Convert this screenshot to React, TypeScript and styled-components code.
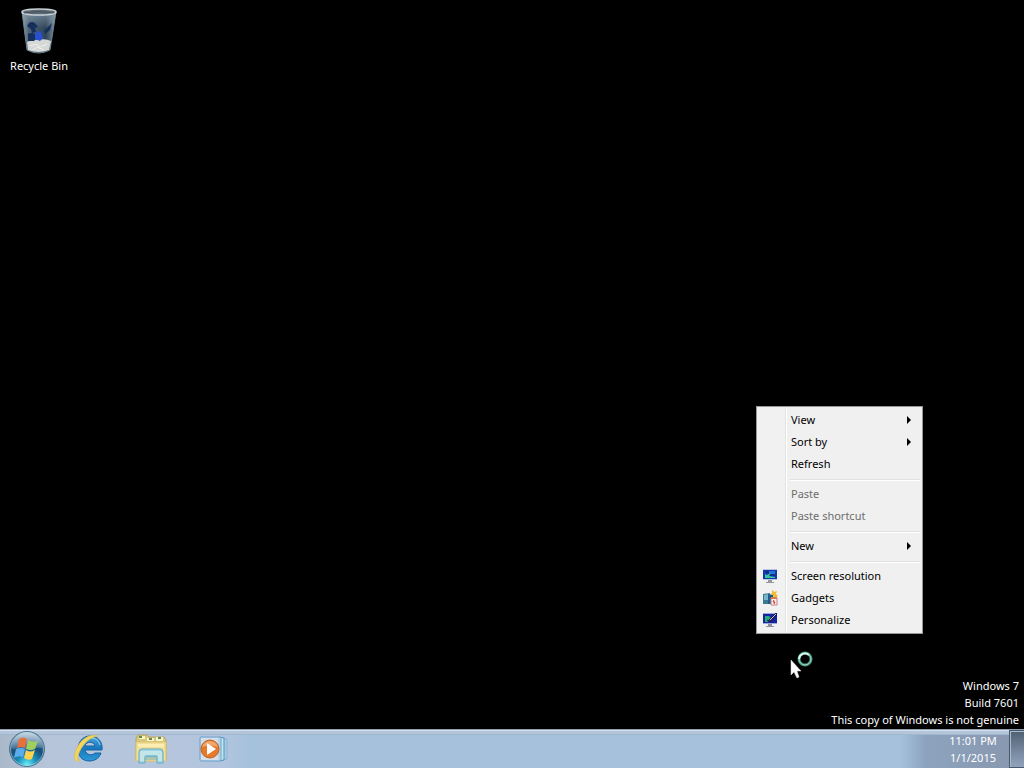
import React from "react";
import styled, { createGlobalStyle } from "styled-components";

const GlobalStyle = createGlobalStyle`
  * { box-sizing: border-box; }
  body {
    margin: 0;
    background: #000;
    font-family: "Noto Sans", "Open Sans", sans-serif;
    font-size: 11px;
  }
  button { font: inherit; color: inherit; border: 0; padding: 0; background: none; }
  svg { display: block; }
`;

const Screen = styled.div`
  position: relative;
  display: flex;
  flex-direction: column;
  min-height: 100vh;
  overflow: hidden;
  background: #000;
`;

const Desktop = styled.main`
  flex: 1;
  display: flex;
  flex-direction: column;
  justify-content: space-between;
  align-items: flex-start;
`;

const DesktopIcon = styled.button`
  display: flex;
  flex-direction: column;
  align-items: center;
  width: 78px;
  padding-top: 7px;
  gap: 3px;
  color: #fff;
  line-height: 16px;
`;

const Watermark = styled.div`
  align-self: flex-end;
  padding: 0 5px 1px 0;
  color: #fff;
  text-align: right;
  line-height: 17px;
`;

const Menu = styled.div`
  position: absolute;
  left: 756px;
  top: 406px;
  width: 167px;
  padding: 2px;
  border: 1px solid #979797;
  background: linear-gradient(to right, #f1f1f1 28px, #e2e3e3 28px, #e2e3e3 29px, #fff 29px, #fff 30px, #f0f0f0 30px);
`;

const MenuItem = styled.button`
  display: grid;
  grid-template-columns: 32px 1fr 12px;
  align-items: center;
  width: 100%;
  height: 22px;
  padding-right: 1px;
  text-align: left;
  color: #000;
  line-height: 22px;
  white-space: nowrap;
  &:disabled { color: #6d6d6d; }
`;

const IconSlot = styled.span`
  padding-left: 3px;
`;

const Separator = styled.hr`
  height: 2px;
  margin: 4px 0 2px 31px;
  border: 0;
  border-top: 1px solid #e0e0e0;
  border-bottom: 1px solid #fff;
`;

const Pointer = styled.div`
  position: absolute;
  left: 790px;
  top: 650px;
`;

const Taskbar = styled.footer`
  display: flex;
  height: 39px;
  border-top: 1px solid #8e9fb2;
  background:
    linear-gradient(to bottom, #d3dfed 0, #d3dfed 1px, #b4c5da 1px, #b4c5da 4px, #a0b7d0 4px, #a0b7d0 5px, transparent 5px),
    linear-gradient(to right, #aab9ca 0, #b6c5da 50px, #b3c5de 220px, #a6c1dc 250px, #a6c1dc calc(100% - 124px), #8da3bd calc(100% - 98px), #8796ad 100%);
`;

const Launchers = styled.nav`
  display: flex;
  flex: 1;
`;

const Launcher = styled.button<{ $start?: boolean }>`
  display: flex;
  align-items: center;
  justify-content: center;
  width: ${(p) => (p.$start ? 54 : 62)}px;
  margin-right: ${(p) => (p.$start ? 4 : 0)}px;
`;

const Clock = styled.time`
  width: 72px;
  padding-top: 2px;
  color: #fff;
  text-align: center;
  line-height: 17px;
`;

const ShowDesktop = styled.button`
  width: 15px;
  border: 1px solid #48596d;
  border-right: 0;
  background: linear-gradient(#4f6073, #788ba3 60%, #8fa3bd);
  box-shadow: inset 1px 1px 0 #a9bacb;
`;

const RecycleBin = () => (
  <svg width="40" height="48" viewBox="0 0 40 48" aria-hidden="true">
    <defs>
      <linearGradient id="bin" x1="0" x2="1">
        <stop offset="0" stopColor="#8da0ac" />
        <stop offset=".2" stopColor="#4c6376" />
        <stop offset=".7" stopColor="#2f4457" />
        <stop offset="1" stopColor="#8495a2" />
      </linearGradient>
      <linearGradient id="binTop" x1="0" y1="0" x2="0" y2="1">
        <stop offset="0" stopColor="#8a9dab" stopOpacity=".7" />
        <stop offset=".4" stopColor="#8a9dab" stopOpacity="0" />
      </linearGradient>
    </defs>
    <path d="M3 5 L8 43 Q20 49 31 43 L37 5 Q20 10 3 5Z" fill="url(#bin)" stroke="#70828f" />
    <path d="M3 5 L8 43 Q20 49 31 43 L37 5 Q20 10 3 5Z" fill="url(#binTop)" />
    <path d="M8 35 Q14 32 19 33 Q26 31 32 34 L30 43 Q20 47 9 43Z" fill="#d5d8d7" />
    <path d="M11 39l6-2 4 3 7-3M14 43l4-3 7 3" stroke="#f0f0ec" fill="none" />
    <path d="M8 19q3-6 8-3l3 4-3 1 1 4-4 1-1-4zM9 27q5-3 10 3l-4 4H9zM25 24l8-8-2 7-5 4z" fill="#15305a" />
    <path d="M16 27q3-5 6-2l2 6-3 3-5-2z" fill="#2a4fd0" />
    <ellipse cx="20" cy="5" rx="17" ry="3" fill="#5b6873" stroke="#cbd2d6" strokeWidth="1.500" />
    <path d="M5 6Q20 3 35 6" stroke="#46545e" fill="none" />
  </svg>
);

const StartOrb = () => (
  <svg width="38" height="38" viewBox="0 0 38 38" aria-hidden="true">
    <defs>
      <radialGradient id="orb" cx=".5" cy=".95" r=".9">
        <stop offset="0" stopColor="#6cf0f6" />
        <stop offset=".3" stopColor="#1b91bd" />
        <stop offset=".6" stopColor="#1a4c78" />
        <stop offset="1" stopColor="#5f8bab" />
      </radialGradient>
      <linearGradient id="orbShine" x1="0" y1="0" x2="0" y2="1">
        <stop offset="0" stopColor="#fff" stopOpacity=".65" />
        <stop offset="1" stopColor="#fff" stopOpacity=".1" />
      </linearGradient>
    </defs>
    <circle cx="19" cy="19" r="17.500" fill="url(#orb)" stroke="#4f7592" />
    <path d="M3 18C4 8 11 2 19 2s15 6 16 16c-9-2-22 5-32 0z" fill="url(#orbShine)" />
    <path d="M11 9q4-3 8 0l-2 9q-4-2-8 0z" fill="#e8703c" />
    <path d="M20 10q4 3 10 1l-3 8q-4 2-9 0z" fill="#9fcf5e" />
    <path d="M8 19q5-2 9 0l-2 8q-4-2-9 1z" fill="#5cabea" />
    <path d="M18 20q4 3 9 0l-3 9q-4 2-8-1z" fill="#ffd34e" />
    <circle cx="19" cy="19" r="16.500" fill="none" stroke="#a9d0e0" opacity=".6" />
  </svg>
);

const Browser = () => (
  <svg width="34" height="34" viewBox="0 0 34 34" aria-hidden="true">
    <defs>
      <linearGradient id="ie" x1="0" y1="0" x2="0" y2="1">
        <stop offset="0" stopColor="#4ba6dc" />
        <stop offset=".5" stopColor="#1978bd" />
        <stop offset="1" stopColor="#2c9ad6" />
      </linearGradient>
    </defs>
    <path d="M30 18H13c1 5 7 6 10 3h6c-2 6-7 8-12 8-7 0-12-6-11-13C7 8 12 4 18 4c8 0 13 6 12 14zM13 14h10c-1-5-9-5-10 0z" fill="url(#ie)" fillRule="evenodd" stroke="#1762a3" />
    <path d="M10 11q4-5 9-5 7 0 9 7" stroke="#91d6f2" fill="none" />
    <path d="M26 4C17 1 8 8 4 18 1 26 3 32 8 28 5 29 5 24 9 17 13 10 19 5 26 4z" fill="#f4d45b" stroke="#d7b744" strokeWidth=".5" />
  </svg>
);

const Folder = () => (
  <svg width="34" height="32" viewBox="0 0 34 32" aria-hidden="true">
    <path d="M2 5l2-3h9l2 2h15l2 3v20H2z" fill="#d9c679" stroke="#b7a565" />
    <path d="M5 3h6v3H5zM13 5h7v3h-7zM22 4h7v4h-7z" fill="#f6f3cd" />
    <path d="M5 4h3M15 6h3M24 5h3" stroke="#5d8c48" strokeWidth="2" />
    <path d="M2 9h30v19H2z" fill="#f2df96" stroke="#d5c377" />
    <path d="M4 11h26v3H4z" fill="#fbedb4" />
    <path d="M5 30V19q0-3 3-3h18q3 0 3 3v11h-6v-6H11v6z" fill="#a4d6e4" stroke="#65a9c8" />
    <path d="M7 28v-9h20v9M9 28v-7h16v7" fill="none" stroke="#e1f5ed" />
    <path d="M12 23h11M11 26h12" stroke="#67aebe" />
  </svg>
);

const MediaPlayer = () => (
  <svg width="32" height="28" viewBox="0 0 32 28" aria-hidden="true">
    <path d="M25 3l5 1v20l-5 1z" fill="#a9cbe0" stroke="#8bb4d6" />
    <path d="M22 2l5 1v22l-5 1z" fill="#c3e6ea" stroke="#4c93c4" />
    <rect x="3" y="2" width="21" height="24" rx="1" fill="#b6d2e8" stroke="#6fa2cd" />
    <path d="M4 3h17v22H4z" fill="#d5dfea" />
    <circle cx="13" cy="14" r="9" fill="#e57a2b" stroke="#bd6227" />
    <path d="M5 12Q7 6 13 6t8 6q-8-3-16 0z" fill="#f1a66c" />
    <path d="M10 8l9 6-9 6z" fill="#fff" />
  </svg>
);

const ResolutionIcon = () => (
  <svg width="16" height="16" viewBox="0 0 16 16" aria-hidden="true">
    <path d="M1 1h14v11H1z" fill="#b8c6e2" />
    <path d="M1 2h14v9H1z" fill="#1238ae" />
    <path d="M7 3h6v3H7z" fill="#2475d4" />
    <path d="M3 10V6l2 1 4-2-2 3 6 1v1z" fill="#35ca9e" />
    <path d="M4 4h3M8 7h5" stroke="#102254" />
    <path d="M6 12h4v2h2v1H4v-1h2z" fill="#94989d" />
  </svg>
);

const GadgetsIcon = () => (
  <svg width="16" height="16" viewBox="0 0 16 16" aria-hidden="true">
    <path d="M10 1l1-1 1 2 3-1-1 3 2 2-3 2h-4z" fill="#f5bd36" />
    <path d="M1 4l7-1v11H1z" fill="#397994" />
    <path d="M2 5l4-1v6H2z" fill="#78b4ca" />
    <path d="M6 4l5 1v9H6z" fill="#225a8b" />
    <path d="M9 8h6v7H9z" fill="#f5eeee" stroke="#c18481" />
    <path d="M9 8h6" stroke="#e07a4a" strokeWidth="2" />
    <path d="M12 10l-1 2h2l-1 2" stroke="#ce342e" fill="none" />
  </svg>
);

const PersonalizeIcon = () => (
  <svg width="16" height="16" viewBox="0 0 16 16" aria-hidden="true">
    <path d="M1 1h14v11H1z" fill="#9da7dc" />
    <path d="M1 2h14v9H1z" fill="#1823a2" />
    <path d="M3 4h4l2 2-3 4H3z" fill="#25ad75" />
    <path d="M5 8l3 2 7-8-1-1-7 7" fill="#3e244e" stroke="#161c51" />
    <path d="M8 8l6-6" stroke="#d3c0de" />
    <path d="M6 12h4v2h2v1H4v-1h2z" fill="#8e929d" />
  </svg>
);

const Arrow = () => (
  <svg width="4" height="8" viewBox="0 0 4 8" aria-hidden="true">
    <path d="M0 0l4 4-4 4z" fill="#000" />
  </svg>
);

type Entry = { label: string; submenu?: boolean; disabled?: boolean; icon?: React.ReactNode };

const groups: Entry[][] = [
  [{ label: "View", submenu: true }, { label: "Sort by", submenu: true }, { label: "Refresh" }],
  [{ label: "Paste", disabled: true }, { label: "Paste shortcut", disabled: true }],
  [{ label: "New", submenu: true }],
  [
    { label: "Screen resolution", icon: <ResolutionIcon /> },
    { label: "Gadgets", icon: <GadgetsIcon /> },
    { label: "Personalize", icon: <PersonalizeIcon /> },
  ],
];

export default function App() {
  return (
    <Screen>
      <GlobalStyle />
      <Desktop>
        <DesktopIcon>
          <RecycleBin />
          <span>Recycle Bin</span>
        </DesktopIcon>
        <Watermark>
          <div>Windows 7</div>
          <div>Build 7601</div>
          <div>This copy of Windows is not genuine</div>
        </Watermark>
      </Desktop>

      <Menu role="menu">
        {groups.map((group, i) => (
          <React.Fragment key={i}>
            {i > 0 && <Separator />}
            {group.map((item) => (
              <MenuItem key={item.label} role="menuitem" disabled={item.disabled}>
                <IconSlot>{item.icon}</IconSlot>
                <span>{item.label}</span>
                {item.submenu && <Arrow />}
              </MenuItem>
            ))}
          </React.Fragment>
        ))}
      </Menu>

      <Pointer>
        <svg width="24" height="30" viewBox="0 0 24 30" aria-hidden="true">
          <path d="M1 10v15l3-3 3 6 2-1-2-6h4z" fill="#fff" stroke="#d5d5d5" strokeWidth=".5" />
          <circle cx="15" cy="9" r="6" fill="none" stroke="#3f8f7a" strokeWidth="3" />
          <circle cx="15" cy="9" r="6" fill="none" stroke="#a9dccb" strokeWidth="1" />
          <path d="M9 9a6 6 0 0 1 10-4" fill="none" stroke="#d8f7ec" strokeWidth="2" />
        </svg>
      </Pointer>

      <Taskbar>
        <Launchers>
          <Launcher $start aria-label="Start"><StartOrb /></Launcher>
          <Launcher aria-label="Internet Explorer"><Browser /></Launcher>
          <Launcher aria-label="Windows Explorer"><Folder /></Launcher>
          <Launcher aria-label="Windows Media Player"><MediaPlayer /></Launcher>
        </Launchers>
        <Clock>
          <div>11:01 PM</div>
          <div>1/1/2015</div>
        </Clock>
        <ShowDesktop aria-label="Show desktop" />
      </Taskbar>
    </Screen>
  );
}
